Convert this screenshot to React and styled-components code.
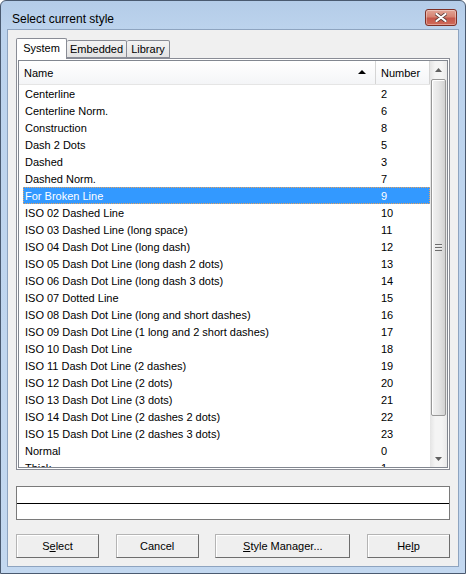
import styled, { createGlobalStyle } from 'styled-components'

const GlobalStyle = createGlobalStyle`
html, body {
    margin: 0;
    padding: 0;
    background: #ffffff;
    overflow: hidden;
}
* { box-sizing: border-box; }
`

const styles = [
    ['Centerline', 2],
    ['Centerline Norm.', 6],
    ['Construction', 8],
    ['Dash 2 Dots', 5],
    ['Dashed', 3],
    ['Dashed Norm.', 7],
    ['For Broken Line', 9],
    ['ISO 02 Dashed Line', 10],
    ['ISO 03 Dashed Line (long space)', 11],
    ['ISO 04 Dash Dot Line (long dash)', 12],
    ['ISO 05 Dash Dot Line (long dash 2 dots)', 13],
    ['ISO 06 Dash Dot Line (long dash 3 dots)', 14],
    ['ISO 07 Dotted Line', 15],
    ['ISO 08 Dash Dot Line (long and short dashes)', 16],
    ['ISO 09 Dash Dot Line (1 long and 2 short dashes)', 17],
    ['ISO 10 Dash Dot Line', 18],
    ['ISO 11 Dash Dot Line (2 dashes)', 19],
    ['ISO 12 Dash Dot Line (2 dots)', 20],
    ['ISO 13 Dash Dot Line (3 dots)', 21],
    ['ISO 14 Dash Dot Line (2 dashes 2 dots)', 22],
    ['ISO 15 Dash Dot Line (2 dashes 3 dots)', 23],
    ['Normal', 0],
    ['Thick', 1],
]

const CloseIcon = () => (
    <svg width="12" height="9" viewBox="0 0 12 9">
        <path d="M1.5 1 L10.5 8 M10.5 1 L1.5 8" stroke="#5a3a36" strokeWidth="3.6" strokeLinecap="round" />
        <path d="M1.5 1 L10.5 8 M10.5 1 L1.5 8" stroke="#ffffff" strokeWidth="2.2" strokeLinecap="round" />
    </svg>
)

const Arrow = ({ down }) => (
    <svg width="7" height="4" viewBox="0 0 7 4">
        <path d={down ? 'M0 0 L7 0 L3.5 4 Z' : 'M0 4 L7 4 L3.5 0 Z'} fill="#606060" />
    </svg>
)

const App = () => {
    const selected = 6
    return (
        <>
            <GlobalStyle />
            <Window>
                <TitleBar>
                    <Title>Select current style</Title>
                    <CloseButton><CloseIcon /></CloseButton>
                </TitleBar>
                <Client>
                    <TabStrip>
                        <Tab active width="51px">System</Tab>
                        <Tab width="60px">Embedded</Tab>
                        <Tab width="43px">Library</Tab>
                    </TabStrip>
                    <Panel>
                        <List>
                            <ListBody>
                                <Header>
                                    <HeadCell width="357px">
                                        Name
                                        <SortArrow />
                                    </HeadCell>
                                    <HeadCell>Number</HeadCell>
                                </Header>
                                <Rows>
                                    {styles.map(([name, num], i) => (
                                        <Row key={name} selected={i === selected}>
                                            <NameCell>{name}</NameCell>
                                            <NumCell>{num}</NumCell>
                                        </Row>
                                    ))}
                                </Rows>
                            </ListBody>
                            <ScrollBar>
                                <ScrollBtn><Arrow /></ScrollBtn>
                                <Track>
                                    <Thumb>
                                        <Grip />
                                    </Thumb>
                                </Track>
                                <ScrollBtn><Arrow down /></ScrollBtn>
                            </ScrollBar>
                        </List>
                    </Panel>
                    <Preview>
                        <PreviewHalf />
                        <PreviewLine />
                        <PreviewHalf />
                    </Preview>
                    <ButtonRow>
                        <Button width="83px">S<u>e</u>lect</Button>
                        <Button width="83px">Cancel</Button>
                        <Button width="135px"><u>S</u>tyle Manager...</Button>
                        <Button width="83px">He<u>l</u>p</Button>
                    </ButtonRow>
                </Client>
            </Window>
        </>
    )
}
export default App;

const Window = styled.div`
width: 466px;
height: 574px;
display: flex;
flex-direction: column;
border: 1px solid #4a5a70;
border-radius: 6px 6px 0 0;
background: linear-gradient(#b4cce8 0px, #bcd3ed 28px, #c3d8f0 100%);
font-family: "Liberation Sans", Tahoma, Arial, sans-serif;
font-size: 11px;
color: #000;
`
const TitleBar = styled.div`
height: 28px;
display: flex;
align-items: center;
justify-content: space-between;
padding: 6px 8px 0 11px;
`
const Title = styled.div`
font-size: 12px;
color: #000;
margin-top: 2px;
`
const CloseButton = styled.div`
width: 32px;
height: 17px;
margin-top: -1px;
display: flex;
align-items: center;
justify-content: center;
border: 1px solid #7e3026;
border-radius: 3px;
background: linear-gradient(#e2a496 0%, #d68372 45%, #c5574a 55%, #cf6b5a 100%);
box-shadow: inset 0 0 0 1px rgba(255, 255, 255, 0.35);
`
const Client = styled.div`
flex: 1;
margin: 0 6px 6px 6px;
border: 1px solid #8ea4c0;
background: #f0f0f0;
padding: 8px 8px 8px 8px;
display: flex;
flex-direction: column;
`
const TabStrip = styled.div`
height: 20px;
display: flex;
align-items: flex-end;
position: relative;
z-index: 1;
`
const Tab = styled.div`
width: ${({ width }) => width};
height: ${({ active }) => (active ? '21px' : '18px')};
margin-bottom: ${({ active }) => (active ? '-1px' : '0')};
padding-top: ${({ active }) => (active ? '3px' : '2px')};
text-align: center;
border: 1px solid #898c95;
border-left: ${({ active }) => (active ? '1px solid #898c95' : 'none')};
border-bottom: ${({ active }) => (active ? 'none' : '1px solid #898c95')};
border-radius: 2px 2px 0 0;
background: ${({ active }) => (active ? '#ffffff' : 'linear-gradient(#f3f3f3, #e3e3e3)')};
white-space: nowrap;
`
const Panel = styled.div`
height: 412px;
border: 1px solid #898c95;
background: #ffffff;
padding: 1px;
`
const List = styled.div`
height: 100%;
border: 1px solid #828790;
display: flex;
overflow: hidden;
background: #ffffff;
`
const ListBody = styled.div`
flex: 1;
display: flex;
flex-direction: column;
overflow: hidden;
`
const Header = styled.div`
height: 24px;
flex: none;
display: flex;
border-bottom: 1px solid #e5e5e5;
background: linear-gradient(#ffffff, #f4f5f7);
`
const HeadCell = styled.div`
width: ${({ width }) => width || 'auto'};
flex: ${({ width }) => (width ? 'none' : '1')};
display: flex;
align-items: center;
padding-left: 5px;
border-right: 1px solid #d5d5d5;
position: relative;
`
const SortArrow = styled.span`
position: absolute;
right: 9px;
top: 9px;
width: 0;
height: 0;
border-left: 4px solid transparent;
border-right: 4px solid transparent;
border-bottom: 4px solid #000;
`
const Rows = styled.div`
flex: 1;
overflow: hidden;
padding-left: 4px;
`
const Row = styled.div`
height: 17px;
display: flex;
align-items: center;
background: ${({ selected }) => (selected ? '#3399ff' : 'transparent')};
color: ${({ selected }) => (selected ? '#ffffff' : '#000000')};
border: 1px dotted ${({ selected }) => (selected ? '#e8a25c' : 'transparent')};
`
const NameCell = styled.div`
width: 353px;
padding-left: 1px;
white-space: nowrap;
overflow: hidden;
`
const NumCell = styled.div`
flex: 1;
padding-left: 4px;
`
const ScrollBar = styled.div`
width: 17px;
flex: none;
display: flex;
flex-direction: column;
background: linear-gradient(90deg, #e4e4e4, #f4f4f4 30%, #f4f4f4 70%, #e9e9e9);
`
const ScrollBtn = styled.div`
height: 17px;
flex: none;
display: flex;
align-items: center;
justify-content: center;
`
const Track = styled.div`
flex: 1;
padding: 1px 0 34px 0;
display: flex;
`
const Thumb = styled.div`
flex: 1;
margin: 0 1px;
border: 1px solid #979797;
border-radius: 2px;
background: linear-gradient(90deg, #f2f2f2, #e6e6e6 50%, #d2d2d2);
box-shadow: inset 1px 1px 0 #ffffff;
display: flex;
align-items: center;
justify-content: center;
`
const Grip = styled.div`
width: 7px;
height: 7px;
background: repeating-linear-gradient(#6d6d6d 0px, #6d6d6d 1px, #eeeeee 1px, #eeeeee 2px, transparent 2px, transparent 3px);
`
const Preview = styled.div`
margin-top: 16px;
height: 34px;
border: 1px solid #7a7a7a;
background: #ffffff;
display: flex;
flex-direction: column;
`
const PreviewHalf = styled.div`
flex: 1;
`
const PreviewLine = styled.div`
height: 1px;
background: #000000;
`
const ButtonRow = styled.div`
margin-top: 14px;
display: flex;
justify-content: space-between;
`
const Button = styled.div`
width: ${({ width }) => width};
height: 24px;
display: flex;
align-items: center;
justify-content: center;
border: 1px solid;
border-color: #b4b4b4 #6d6d6d #6d6d6d #b4b4b4;
background: #efefef;
box-shadow: inset 1px 1px 0 #ffffff;
color: #000;
`
